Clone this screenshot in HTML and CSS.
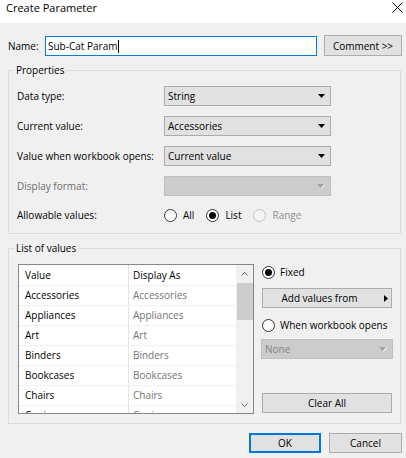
FILE: index.html
```html
<!DOCTYPE html>
<html lang="en">
<head>
  <meta charset="UTF-8" />
  <meta name="viewport" content="width=device-width, initial-scale=1.0"/>
  <title>Create Parameter</title>
  <link rel="stylesheet" href="styles.css">
</head>
<body>
  <div class="dialog">
    <!-- Title bar -->
    <div class="titlebar">
      <span class="title">Create Parameter</span>
      <svg class="close-icon" width="11" height="11" viewBox="0 0 11 11">
        <path d="M0.5 0.5 L10.5 10.5 M10.5 0.5 L0.5 10.5" stroke="#000" stroke-width="1" fill="none"/>
      </svg>
    </div>

    <!-- Name -->
    <div class="name-row">
      <label class="name-label">Name:</label>
      <div class="text-input">Sub-Cat Param<span class="caret"></span></div>
      <button class="btn comment-btn">Comment &gt;&gt;</button>
    </div>

    <!-- Properties -->
    <fieldset class="group">
      <legend>Properties</legend>
      <div class="props">
        <div class="prop-row">
          <span class="prop-label">Data type:</span>
          <div class="dropdown">
            <span class="dropdown-text">String</span>
            <svg class="arrow" width="7" height="4" viewBox="0 0 7 4"><path d="M0 0H7L3.5 4Z"/></svg>
          </div>
        </div>
        <div class="prop-row">
          <span class="prop-label">Current value:</span>
          <div class="dropdown">
            <span class="dropdown-text">Accessories</span>
            <svg class="arrow" width="7" height="4" viewBox="0 0 7 4"><path d="M0 0H7L3.5 4Z"/></svg>
          </div>
        </div>
        <div class="prop-row">
          <span class="prop-label">Value when workbook opens:</span>
          <div class="dropdown">
            <span class="dropdown-text">Current value</span>
            <svg class="arrow" width="7" height="4" viewBox="0 0 7 4"><path d="M0 0H7L3.5 4Z"/></svg>
          </div>
        </div>
        <div class="prop-row tight">
          <span class="prop-label disabled">Display format:</span>
          <div class="dropdown disabled">
            <span class="dropdown-text"></span>
            <svg class="arrow" width="8" height="5" viewBox="0 0 8 5"><path d="M0 0H7L3.5 4Z"/><path d="M7.5 0.5L4.2 4.5" stroke="#fff" fill="none"/></svg>
          </div>
        </div>
        <div class="prop-row">
          <span class="prop-label">Allowable values:</span>
          <div class="radio-group">
            <label class="radio-opt"><span class="radio"></span>All</label>
            <label class="radio-opt"><span class="radio checked"></span>List</label>
            <label class="radio-opt disabled"><span class="radio"></span>Range</label>
          </div>
        </div>
      </div>
    </fieldset>

    <!-- List of values -->
    <fieldset class="group list-group">
      <legend>List of values</legend>
      <div class="list-area">
        <div class="list-box">
          <div class="list-table">
            <div class="list-row head"><span class="c1">Value</span><span class="c2">Display As</span></div>
            <div class="list-row"><span class="c1">Accessories</span><span class="c2">Accessories</span></div>
            <div class="list-row"><span class="c1">Appliances</span><span class="c2">Appliances</span></div>
            <div class="list-row"><span class="c1">Art</span><span class="c2">Art</span></div>
            <div class="list-row"><span class="c1">Binders</span><span class="c2">Binders</span></div>
            <div class="list-row"><span class="c1">Bookcases</span><span class="c2">Bookcases</span></div>
            <div class="list-row"><span class="c1">Chairs</span><span class="c2">Chairs</span></div>
            <div class="list-row"><span class="c1">Copiers</span><span class="c2">Copiers</span></div>
          </div>
          <div class="scrollbar">
            <div class="sb-btn">
              <svg width="7" height="4" viewBox="0 0 7 4"><path d="M0.5 3.5L3.5 0.5L6.5 3.5" stroke="#606060" fill="none"/></svg>
            </div>
            <div class="sb-track"><div class="sb-thumb"></div></div>
            <div class="sb-btn">
              <svg width="7" height="4" viewBox="0 0 7 4"><path d="M0.5 0.5L3.5 3.5L6.5 0.5" stroke="#606060" fill="none"/></svg>
            </div>
          </div>
        </div>

        <div class="list-side">
          <label class="radio-opt"><span class="radio checked"></span>Fixed</label>
          <button class="btn add-btn">
            <span class="add-text">Add values from</span>
            <svg width="4" height="7" viewBox="0 0 4 7"><path d="M0 0L4 3.5L0 7Z"/></svg>
          </button>
          <label class="radio-opt when-opt"><span class="radio"></span>When workbook opens</label>
          <div class="dropdown disabled none-dd">
            <span class="dropdown-text">None</span>
            <svg class="arrow" width="8" height="5" viewBox="0 0 8 5"><path d="M0 0H7L3.5 4Z"/><path d="M7.5 0.5L4.2 4.5" stroke="#fff" fill="none"/></svg>
          </div>
          <button class="btn clear-btn">Clear All</button>
        </div>
      </div>
    </fieldset>

    <!-- Footer buttons -->
    <div class="footer">
      <button class="btn ok-btn">OK</button>
      <button class="btn cancel-btn">Cancel</button>
    </div>
  </div>
</body>
</html>
```

FILE: styles.css
```css
body {
  margin: 0;
  font-family: 'Open Sans', 'Noto Sans', sans-serif;
  font-size: 10px;
  color: #000;
  background-color: #f0f0f0;
}
.dialog {
  width: 406px;
  height: 458px;
  background-color: #f0f0f0;
  overflow: hidden;
}

/* title bar */
.titlebar {
  height: 23px;
  background-color: #ffffff;
  display: flex;
  justify-content: space-between;
  align-items: flex-start;
  padding: 0 3px 0 6px;
  box-sizing: border-box;
}
.title {
  font-size: 11px;
  line-height: 16px;
}
.close-icon {
  margin-top: 2px;
}

/* buttons */
.btn {
  font-family: inherit;
  font-size: 10px;
  color: #000;
  background-color: #e1e1e1;
  border: 1px solid #adadad;
  height: 20px;
  padding: 0;
  margin: 0;
  box-sizing: border-box;
  cursor: pointer;
}

/* name row */
.name-row {
  display: flex;
  align-items: center;
  margin-top: 12px;
  height: 21px;
}
.name-label {
  width: 45px;
  padding-left: 8px;
  box-sizing: border-box;
}
.text-input {
  width: 272px;
  height: 20px;
  border: 1px solid #0078d7;
  background-color: #ffffff;
  box-sizing: border-box;
  padding-left: 2px;
  line-height: 18px;
}
.caret {
  display: inline-block;
  width: 1px;
  height: 13px;
  background-color: #000;
  vertical-align: -3px;
  margin-left: 1px;
}
.comment-btn {
  width: 78px;
  height: 21px;
  margin-left: 7px;
}

/* group boxes */
.group {
  margin: 7px 5px 0 8px;
  padding: 0;
  border: 1px solid #dcdcdc;
  min-width: 0;
}
.group legend {
  margin-left: 5px;
  padding: 0 2px;
  line-height: 14px;
  font-size: 10px;
}
.props {
  padding: 9px 0 8px 8px;
}
.prop-row {
  display: flex;
  align-items: center;
  height: 20px;
  margin-bottom: 10px;
}
.prop-row.tight {
  margin-bottom: 9px;
}
.prop-row:last-child {
  margin-bottom: 0;
}
.prop-label {
  width: 147px;
}
.prop-label.disabled {
  color: #6d6d6d;
}

/* dropdowns */
.dropdown {
  width: 167px;
  height: 20px;
  border: 1px solid #acacac;
  background-color: #e1e1e1;
  box-sizing: border-box;
  display: flex;
  align-items: center;
  padding: 0 5px 0 3px;
}
.dropdown-text {
  flex: 1;
  line-height: 18px;
}
.dropdown .arrow {
  fill: #000;
}
.dropdown.disabled {
  background-color: #cccccc;
  border-color: #bfbfbf;
  color: #838383;
}
.dropdown.disabled .arrow {
  fill: #a3a3a3;
  margin-top: 1px;
}

/* radios */
.radio-group {
  display: flex;
}
.radio-opt {
  display: inline-flex;
  align-items: center;
  gap: 6px;
  margin-right: 12px;
}
.radio {
  width: 13px;
  height: 13px;
  border: 1px solid #333;
  border-radius: 50%;
  background-color: #fff;
  box-sizing: border-box;
  display: inline-flex;
  align-items: center;
  justify-content: center;
}
.radio.checked::after {
  content: "";
  width: 7px;
  height: 7px;
  border-radius: 50%;
  background-color: #000;
}
.radio-opt.disabled {
  color: #8f8f8f;
}
.radio-opt.disabled .radio {
  border-color: #c4c4c4;
  background-color: #f4f4f4;
}

/* list of values */
.list-group {
  padding: 0;
}
.list-area {
  display: flex;
  padding: 9px 0 9px 9px;
}
.list-box {
  width: 236px;
  height: 150px;
  border: 1px solid #828790;
  background-color: #ffffff;
  box-sizing: border-box;
  display: flex;
  overflow: hidden;
}
.list-table {
  flex: 1;
  overflow: hidden;
}
.list-row {
  display: grid;
  grid-template-columns: 110px 1fr;
  height: 20px;
  line-height: 19px;
  border-bottom: 1px solid #f0f0f0;
  box-sizing: border-box;
}
.list-row.head {
  height: 21px;
  line-height: 20px;
}
.c1 {
  padding-left: 6px;
  border-right: 1px solid #e3e3e3;
}
.c2 {
  padding-left: 4px;
  color: #747474;
}
.list-row.head .c2 {
  color: #000;
}
.scrollbar {
  width: 17px;
  background-color: #f0f0f0;
  display: flex;
  flex-direction: column;
}
.sb-btn {
  height: 17px;
  display: flex;
  align-items: center;
  justify-content: center;
}
.sb-track {
  flex: 1;
}
.sb-thumb {
  height: 37px;
  margin: 1px 0 0 1px;
  background-color: #cdcdcd;
}

.list-side {
  width: 130px;
  height: 150px;
  margin-left: 8px;
  display: flex;
  flex-direction: column;
}
.list-side .radio-opt {
  height: 16px;
  gap: 5px;
  margin-right: 0;
}
.add-btn {
  margin-top: 8px;
  display: flex;
  align-items: center;
  padding-right: 3px;
}
.add-text {
  flex: 1;
  text-align: center;
  padding-right: 8px;
}
.list-side .when-opt {
  margin-top: 9px;
}
.none-dd {
  width: 132px;
  margin: 6px 0 0 -1px;
}
.clear-btn {
  margin-top: auto;
  margin-bottom: 1px;
}

/* footer */
.footer {
  display: flex;
  justify-content: flex-end;
  gap: 8px;
  margin-top: 9px;
  padding-right: 4px;
}
.ok-btn {
  width: 72px;
  border: 2px solid #0078d7;
}
.cancel-btn {
  width: 73px;
}
```
